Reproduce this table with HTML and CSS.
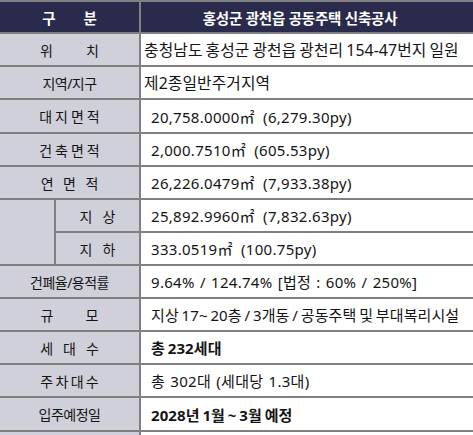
FILE: index.html
```html
<!DOCTYPE html>
<html lang="ko">
<head>
<meta charset="utf-8">
<title>홍성군 광천읍 공동주택 신축공사</title>
<link rel="stylesheet" href="styles.css">
</head>
<body>
<table class="spec">
  <colgroup>
    <col class="c1"><col class="c2"><col class="c3">
  </colgroup>
  <tr class="head">
    <th colspan="2" class="hl"><span class="sp sp28">구분</span></th>
    <th class="hr">홍성군 광천읍 공동주택 신축공사</th>
  </tr>
  <tr>
    <td colspan="2" class="lab"><span class="sp sp33">위치</span></td>
    <td class="val tight snug">충청남도 홍성군 광천읍 광천리 154-47번지 일원</td>
  </tr>
  <tr>
    <td colspan="2" class="lab">지역/지구</td>
    <td class="val tight snug">제2종일반주거지역</td>
  </tr>
  <tr class="tall">
    <td colspan="2" class="lab"><span class="sp sp3">대지면적</span></td>
    <td class="val">20,758.0000<span class="unit">㎡</span> (6,279.30py)</td>
  </tr>
  <tr>
    <td colspan="2" class="lab"><span class="sp sp3">건축면적</span></td>
    <td class="val">2,000.7510<span class="unit">㎡</span> (605.53py)</td>
  </tr>
  <tr>
    <td colspan="2" class="lab"><span class="sp sp9">연면적</span></td>
    <td class="val">26,226.0479<span class="unit">㎡</span> (7,933.38py)</td>
  </tr>
  <tr>
    <td rowspan="2" class="lab"></td>
    <td class="lab"><span class="sp sp10">지상</span></td>
    <td class="val">25,892.9960<span class="unit">㎡</span> (7,832.63py)</td>
  </tr>
  <tr>
    <td class="lab"><span class="sp sp10">지하</span></td>
    <td class="val">333.0519<span class="unit">㎡</span> (100.75py)</td>
  </tr>
  <tr>
    <td colspan="2" class="lab">건폐율/용적률</td>
    <td class="val">9.64% / 124.74% [법정 : 60% / 250%]</td>
  </tr>
  <tr>
    <td colspan="2" class="lab"><span class="sp sp32">규모</span></td>
    <td class="val snug">지상 17~ 20층 / 3개동 / 공동주택 및 부대복리시설</td>
  </tr>
  <tr>
    <td colspan="2" class="lab"><span class="sp sp10">세대수</span></td>
    <td class="val snug strong">총 232세대</td>
  </tr>
  <tr>
    <td colspan="2" class="lab"><span class="sp sp2">주차대수</span></td>
    <td class="val">총 302대 (세대당 1.3대)</td>
  </tr>
  <tr class="tall">
    <td colspan="2" class="lab">입주예정일</td>
    <td class="val snug strong">2028년 1월 ~ 3월 예정</td>
  </tr>
  <tr>
    <td colspan="2" class="lab"></td>
    <td class="val"></td>
  </tr>
</table>
</body>
</html>
```
FILE: styles.css
```css
html, body {
  margin: 0;
  padding: 0;
  background: #ffffff;
  overflow: hidden;
}

.spec {
  width: 473px;
  table-layout: fixed;
  border-collapse: separate;
  border-spacing: 0;
  border-top: 2px solid #808080;
  font-family: "Noto Sans", "Noto Sans CJK KR", sans-serif;
  color: #141414;
}

.c1 { width: 56px; }
.c2 { width: 85px; }

.spec tr { height: 33px; }
.spec tr.head { height: 32px; }
.spec tr.tall { height: 34px; }

.spec th,
.spec td {
  padding: 0;
  border-bottom: 2px solid #808080;
  vertical-align: middle;
  white-space: nowrap;
  overflow: hidden;
}

.spec .head th {
  background: #2a2a4d;
  color: #ffffff;
  font-weight: 700;
  font-size: 14.5px;
  letter-spacing: -0.2px;
}

.spec .hl {
  text-align: center;
  border-right: 2px solid #808080;
}

.spec .hr {
  text-align: center;
  padding-right: 14px;
}

.spec .lab {
  background: #cfd0d9;
  text-align: center;
  font-size: 14px;
  letter-spacing: -0.5px;
  border-right: 2px solid #808080;
}

.spec .val {
  background: #ffffff;
  font-size: 15px;
  letter-spacing: 0.3px;
  word-spacing: 1px;
  padding-left: 10px;
  text-align: left;
}

.spec .val.snug {
  letter-spacing: 0.1px;
  word-spacing: -1.2px;
}

.spec .val.tight {
  font-size: 15.8px;
  padding-left: 3px;
}

.spec .val.strong {
  font-weight: 700;
}

.unit {
  margin-right: 3px;
}

.sp { display: inline; }
.sp2 { letter-spacing: 2.3px; margin-right: -2.3px; }
.sp3 { letter-spacing: 3px; margin-right: -3px; }
.sp9 { letter-spacing: 9.5px; margin-right: -9.5px; }
.sp10 { letter-spacing: 10px; margin-right: -10px; }
.sp28 { letter-spacing: 28px; margin-right: -28px; }
.sp32 { letter-spacing: 32px; margin-right: -32px; }
.sp33 { letter-spacing: 33px; margin-right: -33px; }
```
